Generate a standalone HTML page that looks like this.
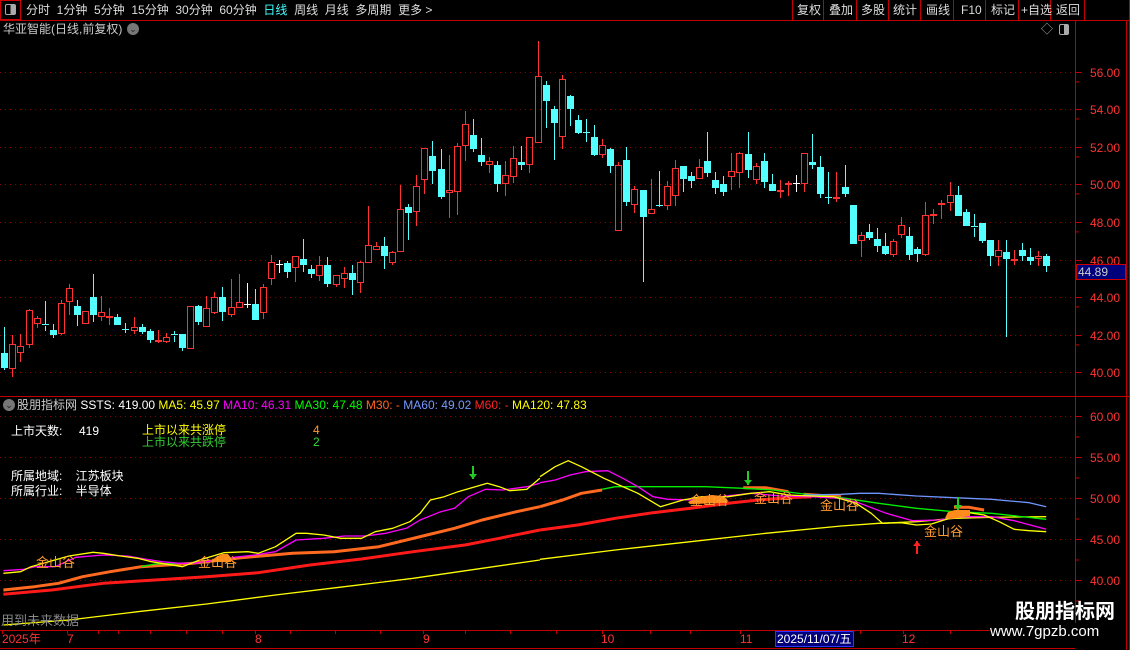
<!DOCTYPE html>
<html><head><meta charset="utf-8">
<style>
*{margin:0;padding:0;box-sizing:border-box}
body{width:1130px;height:650px;background:#000;overflow:hidden;font-family:"Liberation Sans","Noto Sans CJK SC",sans-serif;position:relative;color:#ddd}
.t{position:absolute;white-space:nowrap;font-size:12px;line-height:14px}
</style></head><body>
<svg id="s" width="1130" height="650" style="position:absolute;left:0;top:0" xmlns="http://www.w3.org/2000/svg"></svg>

<div class="t" style="left:0;top:0;width:21px;height:20px;border:1px solid #c00"></div>
<div class="t" style="left:5px;top:4px;width:11px;height:11px;border:1px solid #aaa;border-radius:2px;background:linear-gradient(90deg,#000 50%,#aaa 50%)"></div>
<div class="t" style="left:26px;top:3px;color:#ddd">分时&nbsp;&nbsp;1分钟&nbsp;&nbsp;5分钟&nbsp;&nbsp;15分钟&nbsp;&nbsp;30分钟&nbsp;&nbsp;60分钟&nbsp;&nbsp;<span style="color:#4ff">日线</span>&nbsp;&nbsp;周线&nbsp;&nbsp;月线&nbsp;&nbsp;多周期&nbsp;&nbsp;更多 &gt;</div>
<div class="t" style="left:797px;top:3px">复权</div>
<div class="t" style="left:829px;top:3px">叠加</div>
<div class="t" style="left:861px;top:3px">多股</div>
<div class="t" style="left:893px;top:3px">统计</div>
<div class="t" style="left:926px;top:3px">画线</div>
<div class="t" style="left:961px;top:3px">F10</div>
<div class="t" style="left:991px;top:3px">标记</div>
<div class="t" style="left:1021px;top:3px">+自选</div>
<div class="t" style="left:1056px;top:3px">返回</div>

<div class="t" style="left:3px;top:22px;color:#ccc">华亚智能(日线,前复权)</div>
<div class="t" style="left:127px;top:23px;width:12px;height:12px;border-radius:6px;background:#777;color:#222;font-size:9px;line-height:12px;text-align:center">⌄</div>
<div class="t" style="left:1041px;top:22px;color:#aaa">◇</div>
<div class="t" style="left:1059px;top:24px;width:10px;height:11px;border:1px solid #aaa;border-radius:2px;background:linear-gradient(90deg,#000 50%,#aaa 50%)"></div>

<div class="t" style="left:1076px;top:264px;width:50px;height:16px;background:#00007a;border:1px solid #c00;color:#ccc;padding-left:1px;line-height:14px">44.89</div>

<div class="t" style="left:3px;top:399px;width:12px;height:12px;border-radius:6px;background:#777;color:#222;font-size:9px;line-height:12px;text-align:center">⌄</div>
<div class="t" style="left:17px;top:398px;color:#ccc">股朋指标网 <span style="color:#fff">SSTS: 419.00</span> <span style="color:#ff0">MA5: 45.97</span> <span style="color:#f0f">MA10: 46.31</span> <span style="color:#0f0">MA30: 47.48</span> <span style="color:#f62">M30: -</span> <span style="color:#79f">MA60: 49.02</span> <span style="color:#f22">M60: -</span> <span style="color:#ff0">MA120: 47.83</span></div>

<div class="t" style="left:11px;top:424px;color:#fff">上市天数:&nbsp;&nbsp;&nbsp;&nbsp;&nbsp;419</div>
<div class="t" style="left:142px;top:424px;color:#ff0;line-height:12px">上市以来共涨停</div>
<div class="t" style="left:142px;top:436px;color:#3c3;line-height:12px">上市以来共跌停</div>
<div class="t" style="left:313px;top:424px;color:#f93;line-height:12px">4</div>
<div class="t" style="left:313px;top:436px;color:#3d3;line-height:12px">2</div>
<div class="t" style="left:11px;top:469px;color:#fff">所属地域:&nbsp;&nbsp;&nbsp;&nbsp;江苏板块</div>
<div class="t" style="left:11px;top:484px;color:#fff">所属行业:&nbsp;&nbsp;&nbsp;&nbsp;半导体</div>
<div class="t" style="left:1px;top:614px;color:#888;font-size:13px">用到未来数据</div>

<div class="t" style="left:1015px;top:601px;color:#fff;font-size:20px;line-height:22px;font-weight:bold">股朋指标网</div>
<div class="t" style="left:990px;top:623px;color:#fff;font-size:15px;line-height:18px;background:#000">www.7gpzb.com</div>

<div class="t" style="left:2px;top:632px;color:#f33">2025年</div>
<div class="t" style="left:67px;top:632px;color:#f33">7</div>
<div class="t" style="left:255px;top:632px;color:#f33">8</div>
<div class="t" style="left:423px;top:632px;color:#f33">9</div>
<div class="t" style="left:601px;top:632px;color:#f33">10</div>
<div class="t" style="left:740px;top:632px;color:#f33">11</div>
<div class="t" style="left:775px;top:631px;width:79px;height:16px;background:#00007a;color:#fff;border:1px solid #33f;padding-left:1px">2025/11/07/五</div>
<div class="t" style="left:902px;top:632px;color:#f33">12</div>

<script>
var s=document.getElementById('s'),h='';
function L(x1,y1,x2,y2,c,w,d){h+='<line x1="'+x1+'" y1="'+y1+'" x2="'+x2+'" y2="'+y2+'" stroke="'+c+'" stroke-width="'+(w||1)+'"'+(d?' stroke-dasharray="'+d+'"':'')+'/>';}
function R(x,y,w,hh,f,st){h+='<rect x="'+x+'" y="'+y+'" width="'+w+'" height="'+hh+'" fill="'+f+'"'+(st?' stroke="'+st+'"':'')+'/>';}
function T(x,y,t,c,fs){h+='<text x="'+x+'" y="'+y+'" fill="'+c+'" font-size="'+(fs||12)+'" font-family="Liberation Sans,Noto Sans CJK SC,sans-serif">'+t+'</text>';}
var red='#c00000';
L(0,20.5,1130,20.5,red);
[792,823,856,888,920,953,985,1018,1050,1084].forEach(function(x){L(x+.5,0,x+.5,20,red);});
L(1129.5,0,1129.5,650,red);
L(1075.5,20,1075.5,630,red);
L(1126.5,20,1126.5,650,red);
L(0,396.5,1130,396.5,red);
L(0,630.5,1075,630.5,red);
L(0,648.5,1075,648.5,red);
for(var p=56;p>=40;p-=2){var y=Math.round(71.7+(56-p)*18.78)+.5;L(0,y,1075,y,'#8a0000',1,'1 4');L(1075,y,1082,y,red);T(1090,y+4.5,p.toFixed(2),'#ff3333',12);
 var y2=y+9.39;if(p>40)L(1075,y2,1079,y2,red);}
[[60,416],[55,457],[50,498],[45,539],[40,580]].forEach(function(a){var y=a[1]+.5;L(0,y,1075,y,'#8a0000',1,'1 4');L(1075,y,1082,y,red);T(1090,y+4.5,a[0].toFixed(2),'#ff3333',12);L(1075,y+20.5,1079,y+20.5,red);});
[2,67,98,118,150,186,222,255,290,335,380,423,465,510,556,602,650,690,740,775,860,903,950,1000,1040].forEach(function(x){L(x+.5,630,x+.5,634,red);});
var A=[['c',940,985,861,990],['r',913,986,885,1010],['r',919,938,882,965],['r',811,914,808,923],['r',835,851,828,863],['c',853,858,783,873],['c',870,884,852,893],['r',790,881,780,884],['r',745,785,732,825],['c',798,825,780,858],['r',814,851,814,851],['c',771,825,702,846],['r',817,832,768,842],['r',829,833,804,855],['c',831,855,822,855],['c',866,870,849,880],['r',862,872,831,882],['c',862,876,852,882],['c',873,900,866,908],['r',900,905,870,908],['r',892,905,880,908],['c',882,887,872,906],['c',882,923,882,932],['r',799,926,799,926],['c',798,846,795,855],['r',805,860,768,860],['r',772,818,756,822],['c',771,816,741,843],['r',802,824,717,830],['r',787,803,702,803],['w',791,795,729,803],['c',792,840,747,840],['r',742,818,732,837],['r',667,716,645,735],['w',672,676,660,699],['c',669,696,663,714],['r',649,683,649,726],['c',657,675,597,696],['c',687,702,675,714],['r',676,707,648,722],['c',675,732,651,741],['r',706,734,706,741],['r',700,716,681,744],['c',699,720,675,765],['r',667,728,664,759],['r',616,668,498,668],['r',619,629,606,629],
['c',619,647,591,686],['r',637,670,634,674],['r',508,637,435,637],['c',502,518,492,599],['r',439,517,405,557],['r',325,421,325,461],['c',348,392,303,431],['c',387,470,327,476],['r',451,460,345,533],['r',319,457,310,524],['r',253,319,213,362],['c',286,326,237,335],['c',346,365,294,377],['r',364,376,351,398],['c',376,431,363,455],['r',406,433,363,467],['r',355,412,318,428],['c',366,374,318,389],['r',292,376,292,398],['r',109,310,3,310],['c',135,182,123,263],['c',207,248,198,359],['r',118,292,105,326],['c',168,206,165,257],['c',240,278,225,281],['c',276,280,237,305],['c',291,344,255,347],['r',316,346,297,353],['c',327,377,324,398],['r',376,574,366,574],['c',360,485,321,497],['r',448,496,438,518],['c',450,530,450,725],['r',508,523,417,523],['c',494,497,393,500],['r',438,499,423,509],['r',384,469,360,497],['c',378,416,378,455]];
var B=[['c',168,182,156,203],['r',142,176,117,176],['c',123,158,36,170],['c',180,203,156,221],['c',192,215,168,227],['r',153,172,99,209],['r',99,160,96,203],['c',102,149,36,173],['r',138,179,129,191],['c',123,185,99,203],['c',192,212,162,212],['r',210,217,180,233],['r',189,196,183,227],['w',188,191,165,215],['r',99,193,99,215],['c',126,134,42,146],['c',141,221,108,233],['c',230,234,156,251],['r',231,236,156,245],['c',201,221,135,230],['c',255,371,255,371],['r',345,362,336,410],['c',336,353,312,359],['c',357,377,324,395],['c',378,401,339,404],['r',363,406,357,412],['r',315,346,291,353],['c',348,404,321,419],['c',387,401,381,425],['r',285,404,246,407],['r',282,289,267,311],['r',249,254,240,296],['r',225,250,186,272],['c',225,287,198,287],['c',276,317,267,317],['c',318,323,282,350],['c',309,362,309,368],['c',360,407,360,437],['r',390,410,360,437],['c',396,416,360,650],['r',417,424,390,434],['c',390,407,369,422],['c',411,422,384,434],['r',408,417,393,437],['c',408,437,402,455]];
var C=[];A.forEach(function(a){C.push([a[0],40+a[1]/3,40+a[2]/3,40+a[3]/3,40+a[4]/3]);});
B.forEach(function(a){C.push([a[0],120+a[1]/3,120+a[2]/3,120+a[3]/3,120+a[4]/3]);});
C.forEach(function(c,i){var x=Math.round(4.3+8.079*i);var col=c[0]=='r'?'#ff3232':c[0]=='c'?'#54ffff':'#fff';
 var t=Math.round(c[1]),b=Math.round(c[2]),hi=Math.round(c[3]),lo=Math.round(c[4]);if(b-t<1)b=t+1;
 L(x+.5,hi,x+.5,t,col);L(x+.5,b,x+.5,lo,col);
 if(c[0]=='r'){R(x-2.5,t+.5,6,Math.max(b-t-1,1),'none',col);}
 else if(c[0]=='w'||b-t<=2){L(x-3,t+.5,x+4,t+.5,col);}
 else R(x-3,t,7,b-t,col);
});
function P(pts,sc,ox,oy,c,w){var d='';pts.forEach(function(p,i){d+=(i?'L':'M')+(ox+p[0]/sc).toFixed(1)+' '+(oy+p[1]/3).toFixed(1);});h+='<path d="'+d+'" fill="none" stroke="'+c+'" stroke-width="'+w+'" stroke-linejoin="round"/>';}
var s9=2.904,s10=2.657;
P([[10,525],[200,510],[400,485],[600,462],[800,435],[1000,410],[1200,385],[1400,355],[1568,330]],s9,0,450,'#ffff00',1.3);
P([[0,328],[200,300],[400,275],[600,250],[800,228],[900,220],[1000,215],[1100,205],[1200,202],[1345,200]],s10,540,450,'#ffff00',1.3);
P([[10,433],[150,420],[300,400],[450,390],[600,380],[750,368],[900,345],[1050,327],[1200,305],[1350,285],[1450,265],[1568,240]],s9,0,450,'#ff1a1a',3);
P([[0,240],[100,225],[200,205],[300,188],[400,175],[500,160],[580,150],[660,143],[720,140]],s10,540,450,'#ff1a1a',3);
P([[10,420],[100,410],[170,400],[240,380],[320,365],[410,350],[560,340],[700,323],[850,310],[970,305],[1100,290],[1240,255],[1320,235],[1400,210],[1500,185],[1568,170]],s9,0,450,'#ff6a20',3);
P([[0,170],[60,150],[110,130],[165,120]],s10,540,450,'#ff6a20',3);
P([[540,113],[600,113],[660,125]],s10,540,450,'#ff6a20',3);
P([[700,133],[800,140]],s10,540,450,'#ff6a20',3);
P([[1100,172],[1140,172],[1180,180]],s10,540,450,'#ff6a20',3);
P([[410,350],[450,342],[540,340],[560,340]],s9,0,450,'#00ee00',1.3);
P([[165,118],[200,110],[300,110],[440,110],[540,115],[620,120],[700,132],[800,143],[900,160],[1000,175],[1100,185],[1200,190],[1345,208]],s10,540,450,'#00ee00',1.3);
P([[700,135],[800,133],[850,130],[900,130],[1000,138],[1100,143],[1200,148],[1300,158],[1345,170]],s10,540,450,'#6f96ff',1.3);
P([[10,362],[70,358],[100,350],[160,350],[220,322],[300,315],[370,318],[420,327],[470,335],[520,340],[560,340],[600,335],[680,322],[740,315],[800,305],[860,270],[940,265],[1000,258],[1060,258],[1120,250],[1180,235],[1220,210],[1280,185],[1320,175],[1360,140],[1410,118],[1460,120],[1530,110],[1568,100]],s9,0,450,'#ff00ff',1.3);
P([[0,98],[40,90],[80,75],[120,65],[180,62],[220,85],[260,110],[300,140],[340,148],[400,150],[480,140],[560,130],[640,138],[720,140],[800,145],[850,160],[920,190],[990,212],[1060,210],[1120,200],[1200,200],[1260,212],[1345,238]],s10,540,450,'#ff00ff',1.3);
P([[10,370],[60,365],[90,350],[200,318],[270,307],[300,310],[350,318],[400,325],[440,335],[530,350],[580,330],[650,308],[720,305],[750,310],[800,290],[860,250],[890,250],[940,255],[990,265],[1050,265],[1090,245],[1140,235],[1190,215],[1220,190],[1250,150],[1290,140],[1330,125],[1380,110],[1415,100],[1450,110],[1480,122],[1530,118],[1568,85]],s9,0,450,'#ffff00',1.3);
P([[0,80],[40,50],[75,32],[110,50],[170,85],[210,105],[260,130],[320,170],[380,150],[430,140],[500,140],[560,130],[610,125],[660,135],[720,138],[780,140],[840,160],[880,190],[910,220],[960,218],[1000,225],[1040,222],[1080,208],[1140,188],[1180,195],[1220,215],[1260,238],[1300,242],[1345,245]],s10,540,450,'#ffff00',1.3);
h+='<path d="M210 562 L216 557 L222 554 L228 554 L231 558 L231 562 Z" fill="#ff8c1a"/>';
h+='<path d="M688 502 L698 497 L712 495 L722 496 L727 499 L727 503 L690 504 Z" fill="#ff8c1a"/>';
h+='<path d="M945 518 L948 512 L955 510 L970 510 L970 516 L950 519 Z" fill="#ff8c1a"/>';
T(36,567,'金山谷','#ff9a30',13);T(198,567,'金山谷','#ff9a30',13);T(690,505,'金山谷','#ff9a30',13);
T(754,503,'金山谷','#ff9a30',13);T(820,510,'金山谷','#ff9a30',13);T(924,536,'金山谷','#ff9a30',13);
function arrow(x,y1,y2,c){var dn=y2>y1;L(x,y1,x,y2,c,2);h+='<path d="M'+(x-4)+' '+(y2+(dn?-5:5))+' L'+(x+4)+' '+(y2+(dn?-5:5))+' L'+x+' '+y2+' Z" fill="'+c+'"/>';}
arrow(473,466,479,'#22cc22');arrow(748,471,485,'#22cc22');arrow(958,497,510,'#22cc22');arrow(917,554,541,'#ff2020');
s.innerHTML=h;
</script>
</body></html>
